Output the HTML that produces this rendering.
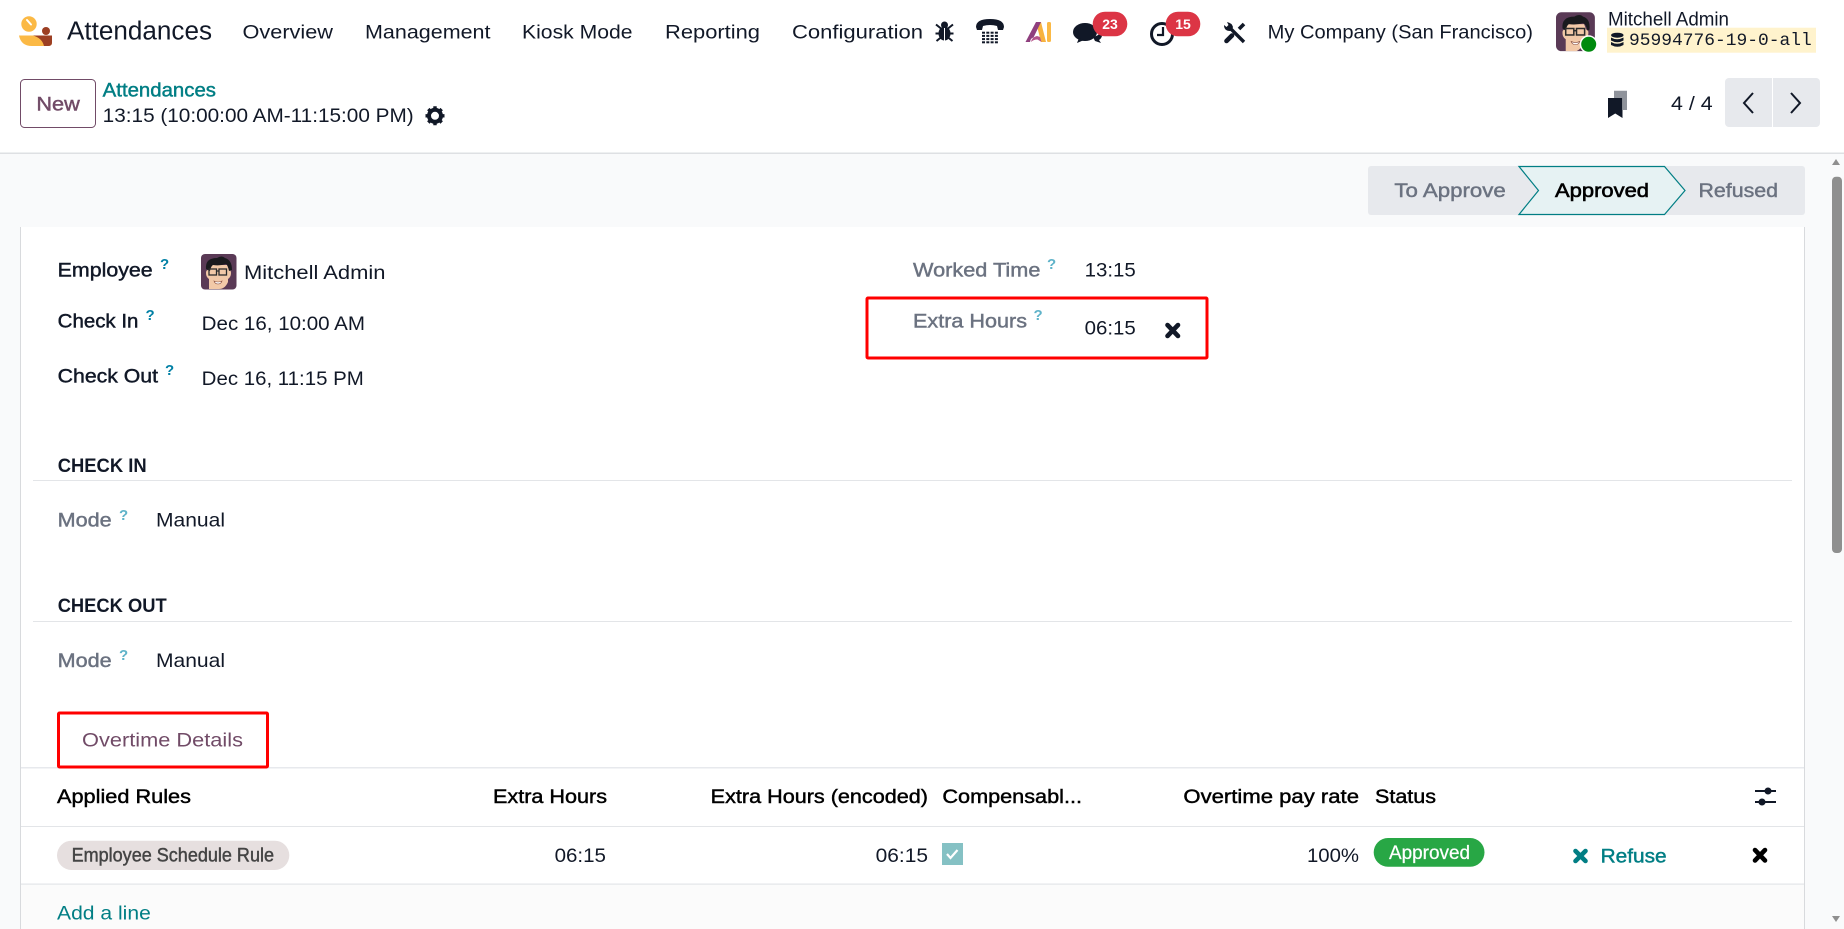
<!DOCTYPE html>
<html lang="en"><head><meta charset="utf-8"><title>Attendances</title>
<style>
html,body{margin:0;padding:0;width:1844px;height:929px;overflow:hidden;background:#fff}
svg{display:block}
text{font-family:"Liberation Sans",Arial,sans-serif;font-size:19.8px;fill:#111827;white-space:pre}
.m{stroke:currentColor;stroke-width:.45px;color:#111827}
.g{fill:#6b7280;color:#6b7280}
.q{font-size:15px;font-weight:bold;fill:#0180a5}
.ql{font-size:15px;font-weight:bold;fill:#5fb3c9}
.t{fill:#017e84;color:#017e84}
.h{color:#000;fill:#000}
</style></head><body>
<svg width="1844" height="929" viewBox="0 0 1844 929" xmlns="http://www.w3.org/2000/svg">
<rect width="1844" height="929" fill="#fff"/>
<!-- content bg -->
<rect y="153" width="1844" height="776" fill="#f9fafb"/>
<rect y="152.500" width="1844" height="1.500" fill="#dee0e3"/>
<!-- logo -->
<circle cx="29" cy="24" r="7.700" fill="#fbb945"/>
<path d="M27 20l4 4.500" stroke="#fff" stroke-width="2" stroke-linecap="round"/>
<circle cx="46" cy="31" r="4" fill="#9c3f23"/>
<path d="M19 35.500h33v7q0 3.500-3.500 3.500H32Q21 46 19 35.500z" fill="#fbb945"/>
<path d="M33 35.500h19v7q0 3.500-3.500 3.500H44Q42 38 33 35.500z" fill="#9c3f23"/>
<!-- nav -->
<text x="67" y="39.500" style="font-size:25.500px" textLength="145" lengthAdjust="spacingAndGlyphs">Attendances</text>
<text x="242.500" y="38.500" textLength="90.500" lengthAdjust="spacingAndGlyphs">Overview</text>
<text x="365" y="38.500" textLength="125.500" lengthAdjust="spacingAndGlyphs">Management</text>
<text x="522" y="38.500" textLength="110.500" lengthAdjust="spacingAndGlyphs">Kiosk Mode</text>
<text x="665" y="38.500" textLength="95" lengthAdjust="spacingAndGlyphs">Reporting</text>
<text x="792" y="38.500" textLength="131" lengthAdjust="spacingAndGlyphs">Configuration</text>
<!-- bug -->
<g fill="#111827">
<ellipse cx="944.500" cy="33.500" rx="6" ry="7"/>
<circle cx="944.500" cy="25" r="3.500"/>
<path d="M936 24.500l5 4M953 24.500l-5 4M935.500 33.500h18M936.500 41l5-4M952.500 41l-5-4" stroke="#111827" stroke-width="2" fill="none"/>
<rect x="944" y="28" width="1" height="13" fill="#fff"/>
</g>
<!-- phone -->
<g fill="#111827">
<path d="M976 27q0-8 14-8t14 8l-1 3h-5l-1-4q-7-2-14 0l-1 4h-5z"/>
<g><rect x="982" y="31.700" width="3" height="2"/><rect x="986.300" y="31.700" width="3" height="2"/><rect x="990.600" y="31.700" width="3" height="2"/><rect x="994.900" y="31.700" width="3" height="2"/>
<rect x="982" y="34.900" width="3" height="2"/><rect x="986.300" y="34.900" width="3" height="2"/><rect x="990.600" y="34.900" width="3" height="2"/><rect x="994.900" y="34.900" width="3" height="2"/>
<rect x="982" y="38.100" width="3" height="2"/><rect x="986.300" y="38.100" width="3" height="2"/><rect x="990.600" y="38.100" width="3" height="2"/><rect x="994.900" y="38.100" width="3" height="2"/>
<rect x="982" y="41.300" width="3" height="2"/><rect x="986.300" y="41.300" width="3" height="2"/><rect x="990.600" y="41.300" width="3" height="2"/><rect x="994.900" y="41.300" width="3" height="2"/></g>
</g>
<!-- AI -->
<path d="M1036 22h5l5 20h-5z" fill="#f7b23f"/>
<path d="M1025.500 42l10.500-20h5l-7.500 15.500q-3 .5-3.500 4.500z" fill="#8f3f7e"/>
<path d="M1031 42q1-5 6-6l3 1 1.500 5-4-2.500q-4 0-6.500 2.500z" fill="#b5548a"/>
<rect x="1047" y="22" width="4" height="20" rx="1.500" fill="#fbb945"/>
<!-- chat -->
<ellipse cx="1085" cy="32" rx="12" ry="9" fill="#111827"/>
<path d="M1079 38l-2 5 7-3z" fill="#111827"/>
<path d="M1093 37q5-1 7-4l2 3q-1 3-3 4l2 3-6-2z" fill="#111827"/>
<rect x="1092.700" y="11.700" width="34.600" height="24.600" rx="12.300" fill="#dc3545"/>
<text x="1110" y="29" text-anchor="middle" style="font-size:14px;font-weight:bold;fill:#fff">23</text>
<!-- clock -->
<circle cx="1162" cy="34" r="10.500" fill="none" stroke="#111827" stroke-width="3"/>
<path d="M1163 27v8h-6" fill="none" stroke="#111827" stroke-width="2.200"/>
<rect x="1165.700" y="11.700" width="34.600" height="24.600" rx="12.300" fill="#dc3545"/>
<text x="1183" y="29" text-anchor="middle" style="font-size:14px;font-weight:bold;fill:#fff">15</text>
<!-- tools -->
<g stroke="#111827" fill="none">
<path d="M1230 28l14 14" stroke-width="3.400"/>
<path d="M1224 25q0 6 6 6l2-1 1-3q-1-4-6-5l1.500 3-2 2z" fill="#111827" stroke="none"/>
<path d="M1226.500 41l5.500-5.500" stroke-width="4.600" stroke-linecap="round"/>
<path d="M1239 29l5-5" stroke-width="3.600"/>
</g>
<text x="1267.700" y="38.500" textLength="265.300" lengthAdjust="spacingAndGlyphs">My Company (San Francisco)</text>
<!-- avatar top -->
<g transform="translate(1556 12.300) scale(1.08)">
<rect width="36" height="36" rx="5" fill="#5a3a56"/>
<path d="M9 36V25q-3-2-3-6 0-3 2-3l1-5h17l2 5q2 0 2 3 0 4-3 6v3q-4 6-8 8z" fill="#f2c9a8"/>
<path d="M6 15Q5 4 17 4q5-3 8 0 7 2 6 12l-2 1q-1-6-4-7-6 2-13 1-2 1-3 6z" fill="#1a1a1e"/>
<g fill="none" stroke="#2c2c2c" stroke-width="1.400"><rect x="9" y="15" width="7.500" height="6"/><rect x="19" y="15" width="7.500" height="6"/><path d="M16.500 17h2.500"/></g>
<path d="M14 27q4 2 8 0-1 3-4 3t-4-3z" fill="#fff" stroke="#8a4f3f" stroke-width=".6"/>
</g>
<circle cx="1588.700" cy="44.300" r="9" fill="#fff"/>
<circle cx="1588.700" cy="44.300" r="7.500" fill="#008a0e"/>
<text x="1608" y="25.700" textLength="121" lengthAdjust="spacingAndGlyphs">Mitchell Admin</text>
<rect x="1607" y="27.700" width="209" height="25" fill="#fff3cd"/>
<g fill="#111827"><ellipse cx="1617.300" cy="35.200" rx="6.200" ry="2.500"/><path d="M1611 37.500q6 3.500 12.500 0v3q-6 3.500-12.500 0z"/><path d="M1611 42q6 3.500 12.500 0v3q-6 3.500-12.500 0z"/></g>
<text x="1629" y="45" style="font-family:'Liberation Mono',monospace;font-size:17.800px" textLength="182.700" lengthAdjust="spacingAndGlyphs">95994776-19-0-all</text>
<!-- control panel -->
<rect x="20.500" y="79.500" width="75" height="48" rx="4" fill="#fff" stroke="#714b67"/>
<text x="36.400" y="110.500" class="m" style="fill:#714b67;color:#714b67" textLength="43.400" lengthAdjust="spacingAndGlyphs">New</text>
<text x="102.700" y="96.500" class="m t" textLength="113.300" lengthAdjust="spacingAndGlyphs">Attendances</text>
<text x="102.700" y="122" textLength="311" lengthAdjust="spacingAndGlyphs">13:15 (10:00:00 AM-11:15:00 PM)</text>
<g transform="translate(435 115.800)">
<circle r="6" fill="none" stroke="#111827" stroke-width="4"/>
<g stroke="#111827" stroke-width="3.400"><path d="M0-9.500v3.500M0 6v3.500M-9.500 0h3.500M6 0h3.500M-6.700-6.700l2.500 2.500M4.200 4.200l2.500 2.500M-6.700 6.700l2.500-2.500M4.200-4.200l2.500-2.500"/></g>
</g>
<!-- bookmarks -->
<path d="M1614 90.700h13v19.300h-4V98h-9z" fill="#8f939b"/>
<path d="M1608 98h14.500v20l-7.250-4.500L1608 118z" fill="#111827"/>
<text x="1671" y="110" textLength="41.600" lengthAdjust="spacingAndGlyphs">4 / 4</text>
<rect x="1725" y="78" width="95" height="49" rx="4" fill="#e7e9ed"/>
<rect x="1772" y="78" width="1" height="49" fill="#fff"/>
<path d="M1753 93l-9 10 9 10" fill="none" stroke="#111827" stroke-width="2"/>
<path d="M1791 93l9 10-9 10" fill="none" stroke="#111827" stroke-width="2"/>
<!-- status bar -->
<rect x="1368" y="166" width="437" height="49" rx="3" fill="#e7e9ed"/>
<path d="M1519 166.500h145.500l20.500 24-20.500 24H1519l19.500-24z" fill="#e6f2f3" stroke="#017e84" stroke-width="1.200"/>
<text x="1394.400" y="197" class="m g" textLength="111.400" lengthAdjust="spacingAndGlyphs">To Approve</text>
<text x="1555" y="197" class="m h" style="stroke-width:.6px" textLength="94" lengthAdjust="spacingAndGlyphs">Approved</text>
<text x="1698.500" y="197" class="m g" textLength="79.500" lengthAdjust="spacingAndGlyphs">Refused</text>
<!-- sheet -->
<rect x="20.500" y="227" width="1784" height="702" fill="#fff"/>
<path d="M20.500 227v702M1804.500 227v702" stroke="#d8dadd" fill="none"/>
<!-- left group -->
<text x="57.700" y="276.500" class="m" textLength="95" lengthAdjust="spacingAndGlyphs">Employee</text>
<text x="160" y="269" class="q">?</text>
<g transform="translate(201 254)">
<rect width="35.500" height="35.500" rx="4" fill="#5a3a56"/>
<path d="M8 35V25q-3-2-3-6 0-3 2-3l1-5h18l2 5q2 0 2 3 0 4-3 6v3q-3 7-9 7z" fill="#f2c9a8"/>
<path d="M5 15Q4 4 16 4q5-3 8 0 7 2 7 12l-3 1q-1-6-3-7-6 2-13 1-2 1-3 6z" fill="#1a1a1e"/>
<g fill="none" stroke="#2c2c2c" stroke-width="1.300"><rect x="8" y="15" width="7.500" height="6"/><rect x="18" y="15" width="7.500" height="6"/><path d="M15.500 17h2.500"/></g>
<path d="M13 27q4 2 8 0-1 3-4 3t-4-3z" fill="#fff" stroke="#8a4f3f" stroke-width=".6"/>
</g>
<text x="244" y="279" textLength="141.500" lengthAdjust="spacingAndGlyphs">Mitchell Admin</text>
<text x="57.700" y="327.700" class="m" textLength="80.700" lengthAdjust="spacingAndGlyphs">Check In</text>
<text x="145.500" y="320" class="q">?</text>
<text x="201.700" y="330" textLength="163.300" lengthAdjust="spacingAndGlyphs">Dec 16, 10:00 AM</text>
<text x="57.700" y="382.300" class="m" textLength="100.300" lengthAdjust="spacingAndGlyphs">Check Out</text>
<text x="165" y="375" class="q">?</text>
<text x="201.700" y="385" textLength="162.100" lengthAdjust="spacingAndGlyphs">Dec 16, 11:15 PM</text>
<!-- right group -->
<text x="913" y="276.500" class="m g" textLength="127.400" lengthAdjust="spacingAndGlyphs">Worked Time</text>
<text x="1047" y="269" class="ql">?</text>
<text x="1084.600" y="276.500" textLength="51.200" lengthAdjust="spacingAndGlyphs">13:15</text>
<text x="913" y="327.700" class="m g" textLength="114" lengthAdjust="spacingAndGlyphs">Extra Hours</text>
<text x="1033.500" y="320" class="ql">?</text>
<text x="1084.600" y="334.300" textLength="51.200" lengthAdjust="spacingAndGlyphs">06:15</text>
<path d="M1167.500 325l10.500 11M1178 325l-10.500 11" stroke="#111827" stroke-width="4.600" stroke-linecap="round"/>
<rect x="867" y="298" width="340" height="60" fill="none" stroke="#f00" stroke-width="3" rx="1"/>
<!-- check in -->
<text x="57.700" y="472" style="font-weight:bold;font-size:19.500px" textLength="89" lengthAdjust="spacingAndGlyphs">CHECK IN</text>
<rect x="33" y="480" width="1759" height="1" fill="#e3e5e8"/>
<text x="57.700" y="526.700" class="m g" textLength="54" lengthAdjust="spacingAndGlyphs">Mode</text>
<text x="119" y="520" class="ql">?</text>
<text x="156" y="526.700" textLength="69" lengthAdjust="spacingAndGlyphs">Manual</text>
<text x="57.700" y="612" style="font-weight:bold;font-size:19.500px" textLength="109" lengthAdjust="spacingAndGlyphs">CHECK OUT</text>
<rect x="33" y="621" width="1759" height="1" fill="#e3e5e8"/>
<text x="57.700" y="667" class="m g" textLength="54" lengthAdjust="spacingAndGlyphs">Mode</text>
<text x="119" y="660" class="ql">?</text>
<text x="156" y="667" textLength="69" lengthAdjust="spacingAndGlyphs">Manual</text>
<!-- tab -->
<rect x="21" y="767" width="1783" height="1.500" fill="#e7e9ed"/>
<text x="82" y="746.700" style="fill:#714b67" textLength="161" lengthAdjust="spacingAndGlyphs">Overtime Details</text>
<rect x="58.500" y="713" width="209" height="54" fill="none" stroke="#f00" stroke-width="3" rx="1"/>
<!-- table -->
<text x="57" y="803" class="m h" textLength="134" lengthAdjust="spacingAndGlyphs">Applied Rules</text>
<text x="493" y="803" class="m h" textLength="114" lengthAdjust="spacingAndGlyphs">Extra Hours</text>
<text x="710.700" y="803" class="m h" textLength="217.300" lengthAdjust="spacingAndGlyphs">Extra Hours (encoded)</text>
<text x="942.400" y="803" class="m h" textLength="139.600" lengthAdjust="spacingAndGlyphs">Compensabl...</text>
<text x="1183.400" y="803" class="m h" textLength="175.600" lengthAdjust="spacingAndGlyphs">Overtime pay rate</text>
<text x="1375" y="803" class="m h" textLength="61" lengthAdjust="spacingAndGlyphs">Status</text>
<g fill="#111827"><rect x="1755" y="790" width="21" height="2"/><circle cx="1768" cy="791" r="3.500"/><rect x="1755" y="801" width="21" height="2"/><circle cx="1762" cy="802" r="3.500"/></g>
<rect x="21" y="826" width="1783" height="1" fill="#e3e5e8"/>
<rect x="57" y="840.700" width="232.300" height="29.300" rx="14.600" fill="#e6dfdf"/>
<text x="71.600" y="861.700" class="m" style="fill:#444;color:#444" textLength="202.400" lengthAdjust="spacingAndGlyphs">Employee Schedule Rule</text>
<text x="554.600" y="862" textLength="51.400" lengthAdjust="spacingAndGlyphs">06:15</text>
<text x="875.600" y="862" textLength="52.400" lengthAdjust="spacingAndGlyphs">06:15</text>
<rect x="942" y="843" width="21" height="22" fill="#85c1c4"/>
<path d="M947 854l3.500 4 7-8" fill="none" stroke="#fff" stroke-width="2.200"/>
<text x="1307" y="862" textLength="52" lengthAdjust="spacingAndGlyphs">100%</text>
<rect x="1373.700" y="838" width="110.800" height="28.700" rx="14.300" fill="#28a745"/>
<text x="1389" y="859" class="m" style="fill:#fff;color:#fff;stroke-width:.25px" textLength="81" lengthAdjust="spacingAndGlyphs">Approved</text>
<path d="M1575.500 851l10 10M1585.500 851l-10 10" stroke="#017e84" stroke-width="4.600" stroke-linecap="round"/>
<text x="1600.600" y="862.700" class="m t" textLength="66" lengthAdjust="spacingAndGlyphs">Refuse</text>
<path d="M1755 850l10 10.500M1765 850l-10 10.500" stroke="#000" stroke-width="4.600" stroke-linecap="round"/>
<rect x="21" y="884" width="1783" height="45" fill="#fbfbfb"/>
<rect x="21" y="883.500" width="1783" height="1.200" fill="#e3e5e8"/>
<text x="57" y="919.300" class="t" textLength="93.800" lengthAdjust="spacingAndGlyphs">Add a line</text>
<!-- scrollbar -->
<rect x="1826" y="154" width="18" height="775" fill="#f9fafb"/>
<path d="M1836 159l4 6h-8z" fill="#8f8f8f"/>
<rect x="1832" y="176.700" width="10" height="376.300" rx="4" fill="#8f8f8f"/>
<path d="M1836 922l4-6h-8z" fill="#8f8f8f"/>
</svg>
</body></html>
